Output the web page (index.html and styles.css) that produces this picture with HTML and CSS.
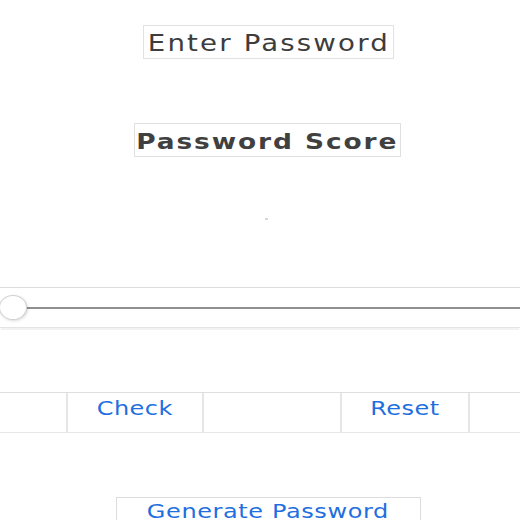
FILE: index.html
```html
<!DOCTYPE html>
<html>
<head>
<meta charset="utf-8">
<link rel="stylesheet" href="styles.css">
</head>
<body>
<div class="page">
  <div class="title-wrap"><div class="title"><span class="wide">Enter Password</span></div></div>
  <div class="score-wrap"><div class="score"><span class="wide">Password Score</span></div></div>
  <div class="dot-wrap"><span class="dot"></span></div>
  <div class="slider-row">
    <div class="track"><span class="thumb"></span></div>
  </div>
  <div class="btn-row">
    <button class="btn btn-check"><span class="wide">Check</span></button>
    <button class="btn btn-reset"><span class="wide">Reset</span></button>
  </div>
  <div class="gen-wrap"><button class="gen"><span class="wide">Generate Password</span></button></div>
</div>
</body>
</html>
```
FILE: styles.css
```css
html, body {
  margin: 0;
  padding: 0;
  background: #fff;
  overflow: hidden;
}
.page {
  width: 520px;
  height: 520px;
  font-family: "DejaVu Sans", "Verdana", sans-serif;
  color: #3a3a3a;
}
.wide {
  display: inline-block;
  transform: scaleX(1.2);
  white-space: nowrap;
}
.title-wrap {
  padding-top: 25px;
  display: flex;
  justify-content: center;
  padding-left: 17px;
}
.title {
  border: 1px solid #e2e2e2;
  height: 31px;
  width: 249px;
  display: flex;
  align-items: center;
  justify-content: center;
  font-size: 23px;
  letter-spacing: 1.8px;
  color: #3d3d3d;
  padding-top: 1px;
}
.score-wrap {
  padding-top: 64px;
  display: flex;
  justify-content: center;
  padding-left: 15px;
}
.score {
  border: 1px solid #e0e0e0;
  height: 30px;
  width: 265px;
  display: flex;
  align-items: center;
  justify-content: center;
  font-size: 22px;
  font-weight: bold;
  letter-spacing: 1.6px;
  color: #404040;
  padding-top: 2px;
}
.dot-wrap {
  height: 130px;
  position: relative;
}
.dot {
  position: absolute;
  left: 265px;
  top: 61px;
  width: 3px;
  height: 2px;
  background: #d8d8d8;
}
.slider-row {
  height: 39px;
  border-top: 1px solid #dcdcdc;
  border-bottom: 1px solid #e4e4e4;
  box-shadow: 0 3px 0 -1px #f3f3f3;
  display: flex;
  align-items: center;
}
.track {
  position: relative;
  flex: 1;
  height: 2px;
  background: #8f8f8f;
  margin-left: 20px;
}
.thumb {
  position: absolute;
  left: -21px;
  top: -12px;
  width: 26px;
  height: 23px;
  border-radius: 50%;
  background: #fff;
  border: 1px solid #d0d0d0;
  box-shadow: 1px 1px 3px rgba(0,0,0,0.15);
}
.btn-row {
  margin-top: 64px;
  height: 39px;
  border-top: 1px solid #dedede;
  border-bottom: 1px solid #e6e6e6;
  display: flex;
  padding-left: 66px;
  gap: 136px;
}
.btn {
  height: 39px;
  background: #fff;
  border: none;
  border-left: 2px solid #e6e6e6;
  border-right: 2px solid #e6e6e6;
  font-family: "DejaVu Sans", "Verdana", sans-serif;
  font-size: 20px;
  letter-spacing: 0.4px;
  color: #1f6fe0;
  padding: 0 0 10px 0;
  margin: 0;
}
.btn-check { width: 138px; }
.btn-reset { width: 130px; }
.gen-wrap {
  padding-top: 64px;
  display: flex;
  justify-content: center;
  padding-left: 16px;
}
.gen {
  width: 305px;
  height: 40px;
  background: #fff;
  border: 1px solid #dcdcdc;
  font-family: "DejaVu Sans", "Verdana", sans-serif;
  font-size: 20px;
  letter-spacing: 0.5px;
  color: #1f6fe0;
  padding: 0 0 12px 0;
}
```
